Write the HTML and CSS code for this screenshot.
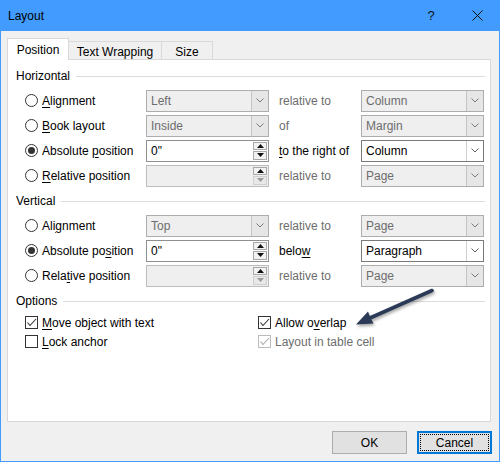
FILE: index.html
```html
<!DOCTYPE html>
<html>
<head>
<meta charset="utf-8">
<link rel="stylesheet" href="styles.css">
</head>
<body>
<div class="window">
  <div class="titlebar">
    <span class="title">Layout</span>
    <span class="cap-btn">?</span>
    <span class="cap-btn"><svg width="11" height="11" viewBox="0 0 11 11"><path d="M0.5 0.5 L10.5 10.5 M10.5 0.5 L0.5 10.5" stroke="#111" stroke-width="1" fill="none"/></svg></span>
  </div>
  <div class="tabs">
    <span class="tab active">Position</span>
    <span class="tab tw">Text Wrapping</span>
    <span class="tab sz">Size</span>
  </div>
  <div class="panel">
    <div class="group-head"><span>Horizontal</span><span class="rule"></span></div>
    <div class="grid">
      <label class="opt"><span class="radio"></span><span><u>A</u>lignment</span></label>
      <div class="combo off"><span class="val">Left</span><span class="drop"><svg width="8" height="5" viewBox="0 0 8 5"><path d="M0.5 0.5 L4 4 L7.5 0.5" stroke="#7a7a7a" fill="none"/></svg></span></div>
      <span class="rel dim">relative to</span>
      <div class="combo off"><span class="val">Column</span><span class="drop"><svg width="8" height="5" viewBox="0 0 8 5"><path d="M0.5 0.5 L4 4 L7.5 0.5" stroke="#7a7a7a" fill="none"/></svg></span></div>

      <label class="opt"><span class="radio"></span><span><u>B</u>ook layout</span></label>
      <div class="combo off"><span class="val">Inside</span><span class="drop"><svg width="8" height="5" viewBox="0 0 8 5"><path d="M0.5 0.5 L4 4 L7.5 0.5" stroke="#7a7a7a" fill="none"/></svg></span></div>
      <span class="rel dim">of</span>
      <div class="combo off"><span class="val">Margin</span><span class="drop"><svg width="8" height="5" viewBox="0 0 8 5"><path d="M0.5 0.5 L4 4 L7.5 0.5" stroke="#7a7a7a" fill="none"/></svg></span></div>

      <label class="opt"><span class="radio on"></span><span>Absolute <u>p</u>osition</span></label>
      <div class="combo spin"><span class="val">0"</span><span class="spinner"><span class="sb"><svg width="7" height="4" viewBox="0 0 7 4"><path d="M0 4 L3.5 0 L7 4 Z" fill="#111"/></svg></span><span class="sb"><svg width="7" height="4" viewBox="0 0 7 4"><path d="M0 0 L3.5 4 L7 0 Z" fill="#111"/></svg></span></span></div>
      <span class="rel"><u>t</u>o the right of</span>
      <div class="combo"><span class="val">Column</span><span class="drop"><svg width="8" height="5" viewBox="0 0 8 5"><path d="M0.5 0.5 L4 4 L7.5 0.5" stroke="#606060" fill="none"/></svg></span></div>

      <label class="opt"><span class="radio"></span><span><u>R</u>elative position</span></label>
      <div class="combo spin off"><span class="val"></span><span class="spinner"><span class="sb"><svg width="7" height="4" viewBox="0 0 7 4"><path d="M0 4 L3.5 0 L7 4 Z" fill="#111"/></svg></span><span class="sb sb-off"><svg width="7" height="4" viewBox="0 0 7 4"><path d="M0 0 L3.5 4 L7 0 Z" fill="#9a9a9a"/></svg></span></span></div>
      <span class="rel dim">relative to</span>
      <div class="combo off"><span class="val">Page</span><span class="drop"><svg width="8" height="5" viewBox="0 0 8 5"><path d="M0.5 0.5 L4 4 L7.5 0.5" stroke="#7a7a7a" fill="none"/></svg></span></div>
    </div>

    <div class="group-head"><span>Vertical</span><span class="rule"></span></div>
    <div class="grid">
      <label class="opt"><span class="radio"></span><span>Ali<u>g</u>nment</span></label>
      <div class="combo off"><span class="val">Top</span><span class="drop"><svg width="8" height="5" viewBox="0 0 8 5"><path d="M0.5 0.5 L4 4 L7.5 0.5" stroke="#7a7a7a" fill="none"/></svg></span></div>
      <span class="rel dim">relative to</span>
      <div class="combo off"><span class="val">Page</span><span class="drop"><svg width="8" height="5" viewBox="0 0 8 5"><path d="M0.5 0.5 L4 4 L7.5 0.5" stroke="#7a7a7a" fill="none"/></svg></span></div>

      <label class="opt"><span class="radio on"></span><span>Absolute po<u>s</u>ition</span></label>
      <div class="combo spin"><span class="val">0"</span><span class="spinner"><span class="sb"><svg width="7" height="4" viewBox="0 0 7 4"><path d="M0 4 L3.5 0 L7 4 Z" fill="#111"/></svg></span><span class="sb"><svg width="7" height="4" viewBox="0 0 7 4"><path d="M0 0 L3.5 4 L7 0 Z" fill="#111"/></svg></span></span></div>
      <span class="rel">belo<u>w</u></span>
      <div class="combo"><span class="val">Paragraph</span><span class="drop"><svg width="8" height="5" viewBox="0 0 8 5"><path d="M0.5 0.5 L4 4 L7.5 0.5" stroke="#606060" fill="none"/></svg></span></div>

      <label class="opt"><span class="radio"></span><span>Rela<u>t</u>ive position</span></label>
      <div class="combo spin off"><span class="val"></span><span class="spinner"><span class="sb"><svg width="7" height="4" viewBox="0 0 7 4"><path d="M0 4 L3.5 0 L7 4 Z" fill="#111"/></svg></span><span class="sb sb-off"><svg width="7" height="4" viewBox="0 0 7 4"><path d="M0 0 L3.5 4 L7 0 Z" fill="#9a9a9a"/></svg></span></span></div>
      <span class="rel dim">relative to</span>
      <div class="combo off"><span class="val">Page</span><span class="drop"><svg width="8" height="5" viewBox="0 0 8 5"><path d="M0.5 0.5 L4 4 L7.5 0.5" stroke="#7a7a7a" fill="none"/></svg></span></div>
    </div>

    <div class="group-head"><span>Options</span><span class="rule"></span></div>
    <div class="checks">
      <label class="opt"><span class="check"><svg width="11" height="11" viewBox="0 0 11 11"><path d="M1.5 5.5 L4 8.5 L10 2" stroke="#333" stroke-width="1.1" fill="none"/></svg></span><span><u>M</u>ove object with text</span></label>
      <label class="opt"><span class="check"><svg width="11" height="11" viewBox="0 0 11 11"><path d="M1.5 5.5 L4 8.5 L10 2" stroke="#333" stroke-width="1.1" fill="none"/></svg></span><span>Allow o<u>v</u>erlap</span></label>
      <label class="opt"><span class="check"></span><span><u>L</u>ock anchor</span></label>
      <label class="opt dim"><span class="check check-off"><svg width="11" height="11" viewBox="0 0 11 11"><path d="M1.5 5.5 L4 8.5 L10 2" stroke="#a8a8a8" stroke-width="1.1" fill="none"/></svg></span><span>Layout in table cell</span></label>
    </div>
  </div>
  <div class="buttons">
    <span class="btn">OK</span>
    <span class="btn default"><span class="focus">Cancel</span></span>
  </div>
  <svg class="callout" width="100" height="56" viewBox="0 0 100 56">
    <path d="M91 10.5 L29 38" stroke="#2b3a56" stroke-width="3.6" stroke-linecap="round" fill="none"/>
    <path d="M15 44.5 L32.5 43.5 L29.5 38 L27 31.5 Z" fill="#2b3a56"/>
  </svg>
</div>
</body>
</html>
```

FILE: styles.css
```css
html, body {
  margin: 0;
  padding: 0;
  background: #ffffff;
}

.window {
  position: relative;
  width: 500px;
  height: 462px;
  box-sizing: border-box;
  border: 1px solid #429cff;
  border-top: none;
  background: #f0f0f0;
  display: flex;
  flex-direction: column;
  font-family: "Liberation Sans", Arial, sans-serif;
  font-size: 12px;
  color: #000;
}

.titlebar {
  height: 31px;
  background: #429cff;
  display: flex;
  align-items: center;
  padding-left: 8px;
  margin: 0 -1px;
}

.title {
  flex: 1;
  font-size: 12px;
  color: #000;
  padding-top: 1px;
}

.cap-btn {
  width: 46px;
  height: 31px;
  display: flex;
  align-items: center;
  justify-content: center;
  font-size: 13px;
  color: #111;
}

.tabs {
  display: flex;
  align-items: flex-end;
  height: 21px;
  margin: 7px 0 0 6px;
}

.tab {
  box-sizing: border-box;
  height: 18px;
  border: 1px solid #d9d9d9;
  border-bottom: none;
  background: #f0f0f0;
  display: flex;
  align-items: center;
  justify-content: center;
  padding-top: 2px;
}

.tab.active {
  position: relative;
  z-index: 1;
  width: 62px;
  height: 22px;
  margin-bottom: -1px;
  background: #ffffff;
  padding-top: 0;
}

.tab.tw {
  width: 94px;
  margin-left: -1px;
}

.tab.sz {
  width: 52px;
  margin-left: -1px;
}

.panel {
  box-sizing: border-box;
  height: 363px;
  margin: 0 8px 0 6px;
  border: 1px solid #d9d9d9;
  background: #ffffff;
  padding: 3px 5px 0 0;
}

.group-head {
  display: flex;
  align-items: center;
  height: 25px;
  padding-left: 8px;
}

.rule {
  flex: 1;
  height: 1px;
  background: #dcdcdc;
  margin-left: 6px;
  margin-top: 1px;
}

.grid {
  display: grid;
  grid-template-columns: 121px 123px 92px 123px;
  grid-auto-rows: 25px;
  align-items: center;
  padding-left: 17px;
}

.opt {
  display: flex;
  align-items: center;
  gap: 4px;
  white-space: nowrap;
}

u {
  text-decoration: underline;
  text-underline-offset: 2px;
}

.radio {
  box-sizing: border-box;
  width: 13px;
  height: 13px;
  border: 1px solid #333;
  border-radius: 50%;
  background: #fff;
  display: flex;
  align-items: center;
  justify-content: center;
  flex: none;
}

.radio.on::after {
  content: "";
  width: 7px;
  height: 7px;
  border-radius: 50%;
  background: #333;
}

.combo {
  box-sizing: border-box;
  height: 22px;
  border: 1px solid #7a7a7a;
  background: #fff;
  display: flex;
}

.combo.off {
  border-color: #adadad;
  background: #efefef;
  color: #6d6d6d;
}

.val {
  flex: 1;
  line-height: 20px;
  padding-left: 4px;
  white-space: nowrap;
}

.drop {
  width: 16px;
  border-left: 1px solid #d0d0d0;
  display: flex;
  align-items: center;
  justify-content: center;
}

.combo.off .drop {
  border-left-color: #c4c4c4;
  background: #e6e6e6;
}

.combo.spin {
  border-color: #8f8f8f;
}

.combo.spin.off {
  border-color: #bdbdbd;
}

.spinner {
  width: 16px;
  display: flex;
  flex-direction: column;
  padding: 1px;
  gap: 1px;
  box-sizing: border-box;
}

.sb {
  flex: 1;
  box-sizing: border-box;
  border: 1px solid #a8a8a8;
  background: #f2f2f2;
  display: flex;
  align-items: center;
  justify-content: center;
}

.sb-off {
  border-color: #d0d0d0;
  background: #e8e8e8;
}

.rel {
  padding-left: 10px;
  white-space: nowrap;
}

.dim {
  color: #6d6d6d;
}

.checks {
  display: grid;
  grid-template-columns: 233px 1fr;
  grid-auto-rows: 19px;
  align-items: center;
  padding-left: 17px;
}

.check {
  box-sizing: border-box;
  width: 13px;
  height: 13px;
  border: 1px solid #333;
  background: #fff;
  display: flex;
  align-items: center;
  justify-content: center;
  flex: none;
}

.check-off {
  border-color: #bcbcbc;
}

.buttons {
  display: flex;
  justify-content: flex-end;
  gap: 10px;
  margin: 9px 7px 0 0;
}

.btn {
  box-sizing: border-box;
  width: 75px;
  height: 23px;
  border: 1px solid #adadad;
  background: #e1e1e1;
  display: flex;
  align-items: center;
  justify-content: center;
}

.btn.default {
  border: 2px solid #0078d7;
  padding: 1px;
}

.focus {
  flex: 1;
  align-self: stretch;
  border: 1px dotted #000;
  display: flex;
  align-items: center;
  justify-content: center;
}

.callout {
  position: absolute;
  left: 340px;
  top: 280px;
  filter: drop-shadow(1px 2px 1.5px rgba(0, 0, 0, 0.35));
}
```
